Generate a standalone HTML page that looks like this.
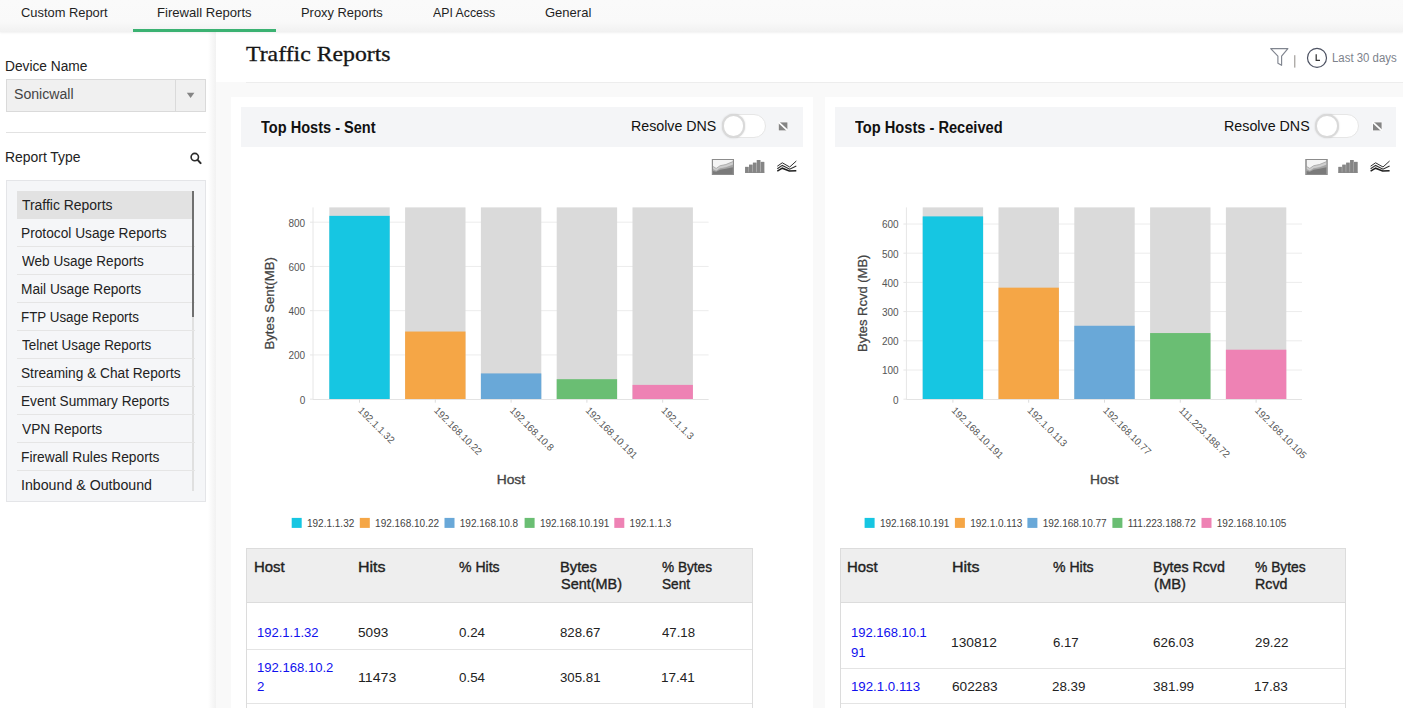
<!DOCTYPE html>
<html>
<head>
<meta charset="utf-8">
<title>Traffic Reports</title>
<style>
html,body{margin:0;padding:0;}
body{width:1403px;height:708px;overflow:hidden;position:relative;background:#f9f9f9;font-family:"Liberation Sans",sans-serif;}
div,span,svg{position:absolute;box-sizing:border-box;}
.t{white-space:nowrap;transform-origin:0 0;}
.card{background:#fff;top:97px;height:620px;}
.ph{background:#f4f5f7;top:107.2px;height:39.8px;}
.tog{width:43.6px;height:23.8px;border-radius:12px;background:#fff;border:1px solid #e6e6e6;top:114px;}
.knob{width:23.6px;height:23.6px;border-radius:50%;background:#fff;border:2.2px solid #d9d9d9;top:114.1px;box-shadow:0 0 2px rgba(0,0,0,.15);}
.tbl{border:1px solid #dcdcdc;background:#fff;top:547.6px;height:170px;width:506.6px;}
.thd{background:#eeeeee;top:548.6px;height:54.4px;width:504.6px;border-bottom:1px solid #dcdcdc;}
.rl{height:1px;background:#e4e4e4;width:504.6px;}
</style>
</head>
<body>
<!-- nav -->
<div style="left:0;top:0;width:1403px;height:32px;background:linear-gradient(180deg,#fafafa 0,#f9f9f9 22px,#f1f1f1 32px);box-shadow:0 1px 2px rgba(0,0,0,.06);z-index:3"></div>
<div style="left:132.8px;top:29.1px;width:143.7px;height:2.9px;background:#3bb272;z-index:4"></div>
<!-- sidebar -->
<div style="left:0;top:32px;width:215.6px;height:676px;background:linear-gradient(90deg,#fff 0,#fff 208px,#f2f2f2 215.6px);z-index:1"></div>
<!-- main header -->
<div style="left:215.6px;top:32px;width:1188px;height:49.6px;background:#fff;"></div>
<div style="left:246px;top:81.6px;width:1157px;height:1px;background:#ededed;"></div>

<!-- sidebar widgets -->
<div style="left:6px;top:79px;width:200px;height:33px;background:#f0f0f0;border:1px solid #dadada;z-index:2"></div>
<div style="left:175px;top:80px;width:1px;height:31px;background:#dadada;z-index:2"></div>
<svg style="left:186px;top:92px;z-index:2" width="10" height="7" viewBox="0 0 10 7"><path d="M0.8 0.7 L8.4 0.7 L4.6 6 Z" fill="#858585"/></svg>
<div style="left:6px;top:131.6px;width:199.6px;height:1px;background:#e2e2e2;z-index:2"></div>
<svg style="left:188px;top:151px;z-index:2" width="15" height="15" viewBox="0 0 15 15"><circle cx="6.8" cy="6.1" r="3.7" fill="none" stroke="#2b2b2b" stroke-width="1.6"/><path d="M9.6 8.9 L12.6 12.1" stroke="#2b2b2b" stroke-width="2.1" stroke-linecap="round"/></svg>
<div style="left:6px;top:180.4px;width:199.6px;height:321.2px;background:#f5f6f8;border:1px solid #e4e5e8;z-index:2"></div>
<div style="left:16.8px;top:191px;width:175.4px;height:28px;background:#e2e2e2;z-index:2"></div>

<div style="left:192.2px;top:191px;width:2px;height:300px;background:#e0e0e0;z-index:2"></div>
<div style="left:16.8px;top:246px;width:178px;height:1px;background:#e5e5e5;z-index:2"></div>
<div style="left:16.8px;top:274px;width:178px;height:1px;background:#e5e5e5;z-index:2"></div>
<div style="left:16.8px;top:302px;width:178px;height:1px;background:#e5e5e5;z-index:2"></div>
<div style="left:16.8px;top:330px;width:178px;height:1px;background:#e5e5e5;z-index:2"></div>
<div style="left:16.8px;top:358px;width:178px;height:1px;background:#e5e5e5;z-index:2"></div>
<div style="left:16.8px;top:386px;width:178px;height:1px;background:#e5e5e5;z-index:2"></div>
<div style="left:16.8px;top:414px;width:178px;height:1px;background:#e5e5e5;z-index:2"></div>
<div style="left:16.8px;top:442px;width:178px;height:1px;background:#e5e5e5;z-index:2"></div>
<div style="left:16.8px;top:470px;width:178px;height:1px;background:#e5e5e5;z-index:2"></div>

<div style="left:192.2px;top:191px;width:2px;height:126px;background:#707070;z-index:2"></div>

<!-- cards -->
<div class="card" style="left:231.1px;width:582.1px;"></div>
<div class="card" style="left:824.7px;width:580px;"></div>
<div class="ph" style="left:241px;width:562px;"></div>
<div class="ph" style="left:834.6px;width:561.6px;"></div>
<div class="tog" style="left:722px;"></div><div class="knob" style="left:721.8px;"></div>
<div class="tog" style="left:1315.6px;"></div><div class="knob" style="left:1315.4px;"></div>

<!-- tables -->
<div class="tbl" style="left:246.2px;"></div><div class="thd" style="left:247.2px;"></div>
<div class="rl" style="left:247.2px;top:649px;"></div><div class="rl" style="left:247.2px;top:703px;"></div>
<div class="tbl" style="left:839.9px;"></div><div class="thd" style="left:840.9px;"></div>
<div class="rl" style="left:840.9px;top:668px;"></div><div class="rl" style="left:840.9px;top:703px;"></div>

<!-- charts + icons -->
<svg style="left:0;top:0;z-index:5" width="1403" height="708" viewBox="0 0 1403 708" font-family="'Liberation Sans', sans-serif">
<line x1="313.0" x2="708.6" y1="354.95" y2="354.95" stroke="#ececec" stroke-width="1"/>
<line x1="313.0" x2="708.6" y1="310.70" y2="310.70" stroke="#ececec" stroke-width="1"/>
<line x1="313.0" x2="708.6" y1="266.45" y2="266.45" stroke="#ececec" stroke-width="1"/>
<line x1="313.0" x2="708.6" y1="222.20" y2="222.20" stroke="#ececec" stroke-width="1"/>
<rect x="329.3" y="207.4" width="60.4" height="191.8" fill="#dadada"/>
<rect x="329.3" y="215.86" width="60.4" height="183.34" fill="#16c6e2"/>
<rect x="405.1" y="207.4" width="60.4" height="191.8" fill="#dadada"/>
<rect x="405.1" y="331.54" width="60.4" height="67.66" fill="#f5a646"/>
<rect x="480.9" y="207.4" width="60.4" height="191.8" fill="#dadada"/>
<rect x="480.9" y="373.42" width="60.4" height="25.78" fill="#69a8d8"/>
<rect x="556.7" y="207.4" width="60.4" height="191.8" fill="#dadada"/>
<rect x="556.7" y="379.18" width="60.4" height="20.02" fill="#6abe73"/>
<rect x="632.5" y="207.4" width="60.4" height="191.8" fill="#dadada"/>
<rect x="632.5" y="384.89" width="60.4" height="14.31" fill="#ee82b4"/>
<line x1="313.0" x2="313.0" y1="207.4" y2="399.7" stroke="#e6e6e6" stroke-width="1"/>
<line x1="313.0" x2="708.6" y1="399.5" y2="399.5" stroke="#e3e3e3" stroke-width="1"/>
<line x1="310.0" x2="313.0" y1="399.20" y2="399.20" stroke="#e6e6e6" stroke-width="1"/>
<text x="305.2" y="403.50" text-anchor="end" font-size="10" fill="#555">0</text>
<line x1="310.0" x2="313.0" y1="354.95" y2="354.95" stroke="#e6e6e6" stroke-width="1"/>
<text x="305.2" y="359.25" text-anchor="end" font-size="10" fill="#555">200</text>
<line x1="310.0" x2="313.0" y1="310.70" y2="310.70" stroke="#e6e6e6" stroke-width="1"/>
<text x="305.2" y="315.00" text-anchor="end" font-size="10" fill="#555">400</text>
<line x1="310.0" x2="313.0" y1="266.45" y2="266.45" stroke="#e6e6e6" stroke-width="1"/>
<text x="305.2" y="270.75" text-anchor="end" font-size="10" fill="#555">600</text>
<line x1="310.0" x2="313.0" y1="222.20" y2="222.20" stroke="#e6e6e6" stroke-width="1"/>
<text x="305.2" y="226.50" text-anchor="end" font-size="10" fill="#555">800</text>
<line x1="359.5" x2="359.5" y1="399.2" y2="402.7" stroke="#dcdcdc" stroke-width="1"/>
<text transform="translate(357.6,411.1) rotate(45)" font-size="9.85" fill="#555">192.1.1.32</text>
<line x1="435.3" x2="435.3" y1="399.2" y2="402.7" stroke="#dcdcdc" stroke-width="1"/>
<text transform="translate(433.4,411.1) rotate(45)" font-size="9.85" fill="#555">192.168.10.22</text>
<line x1="511.1" x2="511.1" y1="399.2" y2="402.7" stroke="#dcdcdc" stroke-width="1"/>
<text transform="translate(509.2,411.1) rotate(45)" font-size="9.85" fill="#555">192.168.10.8</text>
<line x1="586.9" x2="586.9" y1="399.2" y2="402.7" stroke="#dcdcdc" stroke-width="1"/>
<text transform="translate(585.0,411.1) rotate(45)" font-size="9.85" fill="#555">192.168.10.191</text>
<line x1="662.7" x2="662.7" y1="399.2" y2="402.7" stroke="#dcdcdc" stroke-width="1"/>
<text transform="translate(660.8,411.1) rotate(45)" font-size="9.85" fill="#555">192.1.1.3</text>
<text transform="translate(274.0,303.3) rotate(-90)" text-anchor="middle" font-size="13" fill="#444" stroke="#444" stroke-width="0.25" textLength="92.5" lengthAdjust="spacingAndGlyphs">Bytes Sent(MB)</text>
<text x="510.9" y="483.7" text-anchor="middle" font-size="13" fill="#444" stroke="#444" stroke-width="0.35" textLength="28.4" lengthAdjust="spacingAndGlyphs">Host</text>
<rect x="291.7" y="517.9" width="10" height="10" fill="#16c6e2"/>
<text x="307.0" y="526.6" font-size="10" fill="#444">192.1.1.32</text>
<rect x="359.8" y="517.9" width="10" height="10" fill="#f5a646"/>
<text x="375.1" y="526.6" font-size="10" fill="#444">192.168.10.22</text>
<rect x="444.5" y="517.9" width="10" height="10" fill="#69a8d8"/>
<text x="459.8" y="526.6" font-size="10" fill="#444">192.168.10.8</text>
<rect x="524.6" y="517.9" width="10" height="10" fill="#6abe73"/>
<text x="539.9" y="526.6" font-size="10" fill="#444">192.168.10.191</text>
<rect x="614.3" y="517.9" width="10" height="10" fill="#ee82b4"/>
<text x="629.6" y="526.6" font-size="10" fill="#444">192.1.1.3</text>
<line x1="906.4" x2="1302.0" y1="370.00" y2="370.00" stroke="#ececec" stroke-width="1"/>
<line x1="906.4" x2="1302.0" y1="340.80" y2="340.80" stroke="#ececec" stroke-width="1"/>
<line x1="906.4" x2="1302.0" y1="311.60" y2="311.60" stroke="#ececec" stroke-width="1"/>
<line x1="906.4" x2="1302.0" y1="282.40" y2="282.40" stroke="#ececec" stroke-width="1"/>
<line x1="906.4" x2="1302.0" y1="253.20" y2="253.20" stroke="#ececec" stroke-width="1"/>
<line x1="906.4" x2="1302.0" y1="224.00" y2="224.00" stroke="#ececec" stroke-width="1"/>
<rect x="922.7" y="207.4" width="60.4" height="191.8" fill="#dadada"/>
<rect x="922.7" y="216.40" width="60.4" height="182.80" fill="#16c6e2"/>
<rect x="998.5" y="207.4" width="60.4" height="191.8" fill="#dadada"/>
<rect x="998.5" y="287.66" width="60.4" height="111.54" fill="#f5a646"/>
<rect x="1074.3" y="207.4" width="60.4" height="191.8" fill="#dadada"/>
<rect x="1074.3" y="325.76" width="60.4" height="73.44" fill="#69a8d8"/>
<rect x="1150.1" y="207.4" width="60.4" height="191.8" fill="#dadada"/>
<rect x="1150.1" y="333.06" width="60.4" height="66.14" fill="#6abe73"/>
<rect x="1225.9" y="207.4" width="60.4" height="191.8" fill="#dadada"/>
<rect x="1225.9" y="349.71" width="60.4" height="49.49" fill="#ee82b4"/>
<line x1="906.4" x2="906.4" y1="207.4" y2="399.7" stroke="#e6e6e6" stroke-width="1"/>
<line x1="906.4" x2="1302.0" y1="399.5" y2="399.5" stroke="#e3e3e3" stroke-width="1"/>
<line x1="903.4" x2="906.4" y1="399.20" y2="399.20" stroke="#e6e6e6" stroke-width="1"/>
<text x="898.6" y="403.50" text-anchor="end" font-size="10" fill="#555">0</text>
<line x1="903.4" x2="906.4" y1="370.00" y2="370.00" stroke="#e6e6e6" stroke-width="1"/>
<text x="898.6" y="374.30" text-anchor="end" font-size="10" fill="#555">100</text>
<line x1="903.4" x2="906.4" y1="340.80" y2="340.80" stroke="#e6e6e6" stroke-width="1"/>
<text x="898.6" y="345.10" text-anchor="end" font-size="10" fill="#555">200</text>
<line x1="903.4" x2="906.4" y1="311.60" y2="311.60" stroke="#e6e6e6" stroke-width="1"/>
<text x="898.6" y="315.90" text-anchor="end" font-size="10" fill="#555">300</text>
<line x1="903.4" x2="906.4" y1="282.40" y2="282.40" stroke="#e6e6e6" stroke-width="1"/>
<text x="898.6" y="286.70" text-anchor="end" font-size="10" fill="#555">400</text>
<line x1="903.4" x2="906.4" y1="253.20" y2="253.20" stroke="#e6e6e6" stroke-width="1"/>
<text x="898.6" y="257.50" text-anchor="end" font-size="10" fill="#555">500</text>
<line x1="903.4" x2="906.4" y1="224.00" y2="224.00" stroke="#e6e6e6" stroke-width="1"/>
<text x="898.6" y="228.30" text-anchor="end" font-size="10" fill="#555">600</text>
<line x1="952.9" x2="952.9" y1="399.2" y2="402.7" stroke="#dcdcdc" stroke-width="1"/>
<text transform="translate(951.0,411.1) rotate(45)" font-size="9.85" fill="#555">192.168.10.191</text>
<line x1="1028.7" x2="1028.7" y1="399.2" y2="402.7" stroke="#dcdcdc" stroke-width="1"/>
<text transform="translate(1026.8,411.1) rotate(45)" font-size="9.85" fill="#555">192.1.0.113</text>
<line x1="1104.5" x2="1104.5" y1="399.2" y2="402.7" stroke="#dcdcdc" stroke-width="1"/>
<text transform="translate(1102.6,411.1) rotate(45)" font-size="9.85" fill="#555">192.168.10.77</text>
<line x1="1180.3" x2="1180.3" y1="399.2" y2="402.7" stroke="#dcdcdc" stroke-width="1"/>
<text transform="translate(1178.4,411.1) rotate(45)" font-size="9.85" fill="#555">111.223.188.72</text>
<line x1="1256.1" x2="1256.1" y1="399.2" y2="402.7" stroke="#dcdcdc" stroke-width="1"/>
<text transform="translate(1254.2,411.1) rotate(45)" font-size="9.85" fill="#555">192.168.10.105</text>
<text transform="translate(867.4,303.3) rotate(-90)" text-anchor="middle" font-size="13" fill="#444" stroke="#444" stroke-width="0.25" textLength="97.3" lengthAdjust="spacingAndGlyphs">Bytes Rcvd (MB)</text>
<text x="1104.3" y="483.7" text-anchor="middle" font-size="13" fill="#444" stroke="#444" stroke-width="0.35" textLength="28.4" lengthAdjust="spacingAndGlyphs">Host</text>
<rect x="864.6" y="517.9" width="10" height="10" fill="#16c6e2"/>
<text x="879.9" y="526.6" font-size="10" fill="#444">192.168.10.191</text>
<rect x="954.9" y="517.9" width="10" height="10" fill="#f5a646"/>
<text x="970.2" y="526.6" font-size="10" fill="#444">192.1.0.113</text>
<rect x="1027.4" y="517.9" width="10" height="10" fill="#69a8d8"/>
<text x="1042.7" y="526.6" font-size="10" fill="#444">192.168.10.77</text>
<rect x="1112.4" y="517.9" width="10" height="10" fill="#6abe73"/>
<text x="1127.7" y="526.6" font-size="10" fill="#444">111.223.188.72</text>
<rect x="1201.5" y="517.9" width="10" height="10" fill="#ee82b4"/>
<text x="1216.8" y="526.6" font-size="10" fill="#444">192.168.10.105</text>
<path d="M1270.7 48.6 L1287.9 48.6 L1281.6 56.2 L1281.6 65.3 L1277.9 63.2 L1277.9 56.2 Z" fill="none" stroke="#80858f" stroke-width="1.15" stroke-linejoin="round"/>
<rect x="1294.3" y="55.2" width="1" height="12.4" fill="#8f8a86"/>
<circle cx="1317" cy="57.9" r="9.5" fill="none" stroke="#4d5262" stroke-width="1.2"/>
<path d="M1316.2 54.3 L1316.2 60.4 L1320 60.4" fill="none" stroke="#333" stroke-width="1.25"/>
<rect x="778.1" y="121.7" width="10" height="9.4" fill="#fff" opacity="0.6"/>
<rect x="778.8" y="122.4" width="8.6" height="8" fill="#848484"/>
<path d="M778.5 122.1 L787.7 130.7" stroke="#fff" stroke-width="1.7"/>
<rect x="1372.3" y="121.7" width="10" height="9.4" fill="#fff" opacity="0.6"/>
<rect x="1373.0" y="122.4" width="8.6" height="8" fill="#848484"/>
<path d="M1372.7 122.1 L1381.9 130.7" stroke="#fff" stroke-width="1.7"/>
<rect x="712.4" y="159.5" width="21" height="15" fill="#f4f4f4" stroke="#8c8c8c" stroke-width="1"/>
<polygon points="712.9,166.4 716.2,168.4 720.1,165.7 725.9,164.5 732.9,161.6 732.9,174.0 712.9,174.0" fill="#cdcdcd"/>
<polygon points="712.9,168.6 716.2,170.3 720.1,167.8 725.9,166.8 732.9,164.2 732.9,174.0 712.9,174.0" fill="#a4a4a4"/>
<polygon points="712.9,171.0 716.2,171.8 720.1,169.8 725.9,168.8 732.9,167.2 732.9,174.0 712.9,174.0" fill="#7a7a7a"/>
<polyline points="712.9,166.4 716.2,168.4 720.1,165.7 725.9,164.5 732.9,161.6" fill="none" stroke="#9a9a9a" stroke-width="0.7"/>
<polyline points="712.9,168.6 716.2,170.3 720.1,167.8 725.9,166.8 732.9,164.2" fill="none" stroke="#dcdcdc" stroke-width="0.5"/>
<rect x="712.4" y="159.5" width="21" height="15" fill="none" stroke="#8c8c8c" stroke-width="1"/>
<rect x="745.1" y="166.9" width="3.9" height="5.9" fill="#b4b4b4"/>
<rect x="749.0" y="164.7" width="3.9" height="8.1" fill="#b4b4b4"/>
<rect x="752.9" y="162.7" width="3.9" height="10.1" fill="#b4b4b4"/>
<rect x="756.8" y="160.0" width="3.9" height="12.8" fill="#b4b4b4"/>
<rect x="760.7" y="161.9" width="3.9" height="10.9" fill="#b4b4b4"/>
<rect x="745.1" y="166.9" width="3.3" height="5.9" fill="#858585"/>
<rect x="749.0" y="164.7" width="3.3" height="8.1" fill="#858585"/>
<rect x="752.9" y="162.7" width="3.3" height="10.1" fill="#858585"/>
<rect x="756.8" y="160.0" width="3.3" height="12.8" fill="#858585"/>
<rect x="760.7" y="161.9" width="3.3" height="10.9" fill="#858585"/>
<rect x="745.1" y="171.8" width="19.2" height="1" fill="#868686"/>
<polyline points="777.3,166.2 782.3,162.8 789.7,167.0 796.3,161.0" fill="none" stroke="#2e2e2e" stroke-width="1"/>
<polyline points="777.3,168.8 782.3,165.4 789.7,169.2 796.3,166.0" fill="none" stroke="#2e2e2e" stroke-width="1.1"/>
<polyline points="777.3,171.2 782.3,168.2 789.3,171.0 796.3,170.8" fill="none" stroke="#1e1e1e" stroke-width="1.5"/>
<rect x="1306.0" y="159.5" width="21" height="15" fill="#f4f4f4" stroke="#8c8c8c" stroke-width="1"/>
<polygon points="1306.5,166.4 1309.8,168.4 1313.7,165.7 1319.5,164.5 1326.5,161.6 1326.5,174.0 1306.5,174.0" fill="#cdcdcd"/>
<polygon points="1306.5,168.6 1309.8,170.3 1313.7,167.8 1319.5,166.8 1326.5,164.2 1326.5,174.0 1306.5,174.0" fill="#a4a4a4"/>
<polygon points="1306.5,171.0 1309.8,171.8 1313.7,169.8 1319.5,168.8 1326.5,167.2 1326.5,174.0 1306.5,174.0" fill="#7a7a7a"/>
<polyline points="1306.5,166.4 1309.8,168.4 1313.7,165.7 1319.5,164.5 1326.5,161.6" fill="none" stroke="#9a9a9a" stroke-width="0.7"/>
<polyline points="1306.5,168.6 1309.8,170.3 1313.7,167.8 1319.5,166.8 1326.5,164.2" fill="none" stroke="#dcdcdc" stroke-width="0.5"/>
<rect x="1306.0" y="159.5" width="21" height="15" fill="none" stroke="#8c8c8c" stroke-width="1"/>
<rect x="1338.4" y="166.9" width="3.9" height="5.9" fill="#b4b4b4"/>
<rect x="1342.3" y="164.7" width="3.9" height="8.1" fill="#b4b4b4"/>
<rect x="1346.2" y="162.7" width="3.9" height="10.1" fill="#b4b4b4"/>
<rect x="1350.1" y="160.0" width="3.9" height="12.8" fill="#b4b4b4"/>
<rect x="1354.0" y="161.9" width="3.9" height="10.9" fill="#b4b4b4"/>
<rect x="1338.4" y="166.9" width="3.3" height="5.9" fill="#858585"/>
<rect x="1342.3" y="164.7" width="3.3" height="8.1" fill="#858585"/>
<rect x="1346.2" y="162.7" width="3.3" height="10.1" fill="#858585"/>
<rect x="1350.1" y="160.0" width="3.3" height="12.8" fill="#858585"/>
<rect x="1354.0" y="161.9" width="3.3" height="10.9" fill="#858585"/>
<rect x="1338.4" y="171.8" width="19.2" height="1" fill="#868686"/>
<polyline points="1370.6,166.2 1375.6,162.8 1383.0,167.0 1389.6,161.0" fill="none" stroke="#2e2e2e" stroke-width="1"/>
<polyline points="1370.6,168.8 1375.6,165.4 1383.0,169.2 1389.6,166.0" fill="none" stroke="#2e2e2e" stroke-width="1.1"/>
<polyline points="1370.6,171.2 1375.6,168.2 1382.6,171.0 1389.6,170.8" fill="none" stroke="#1e1e1e" stroke-width="1.5"/>
</svg>

<!-- text -->
<div style="left:0;top:0;width:1403px;height:708px;z-index:6">
<span class="t" style='left:20.61px;top:-6.90px;font:400 13px/40px "Liberation Sans", sans-serif;color:#1f1f1f;transform:scaleX(0.9911);'>Custom Report</span>
<span class="t" style='left:156.99px;top:-6.90px;font:400 13px/40px "Liberation Sans", sans-serif;color:#1f1f1f;transform:scaleX(1.0078);'>Firewall Reports</span>
<span class="t" style='left:301.11px;top:-6.90px;font:400 13px/40px "Liberation Sans", sans-serif;color:#1f1f1f;transform:scaleX(0.9921);'>Proxy Reports</span>
<span class="t" style='left:432.67px;top:-6.90px;font:400 13px/40px "Liberation Sans", sans-serif;color:#1f1f1f;transform:scaleX(0.9468);'>API Access</span>
<span class="t" style='left:544.70px;top:-6.90px;font:400 13px/40px "Liberation Sans", sans-serif;color:#1f1f1f;transform:scaleX(1.0008);'>General</span>
<span class="t" style='left:5.28px;top:45.70px;font:400 14px/40px "Liberation Sans", sans-serif;color:#222;transform:scaleX(0.9810);'>Device Name</span>
<span class="t" style='left:13.96px;top:73.70px;font:400 14px/40px "Liberation Sans", sans-serif;color:#444;transform:scaleX(1.0080);'>Sonicwall</span>
<span class="t" style='left:5.27px;top:137.00px;font:400 14px/40px "Liberation Sans", sans-serif;color:#222;transform:scaleX(0.9938);'>Report Type</span>
<span class="t" style='left:21.92px;top:184.60px;font:400 14px/40px "Liberation Sans", sans-serif;color:#222;transform:scaleX(0.9945);'>Traffic Reports</span>
<span class="t" style='left:21.08px;top:212.60px;font:400 14px/40px "Liberation Sans", sans-serif;color:#222;transform:scaleX(0.9798);'>Protocol Usage Reports</span>
<span class="t" style='left:22.01px;top:240.60px;font:400 14px/40px "Liberation Sans", sans-serif;color:#222;transform:scaleX(0.9680);'>Web Usage Reports</span>
<span class="t" style='left:21.08px;top:268.60px;font:400 14px/40px "Liberation Sans", sans-serif;color:#222;transform:scaleX(0.9775);'>Mail Usage Reports</span>
<span class="t" style='left:21.11px;top:296.60px;font:400 14px/40px "Liberation Sans", sans-serif;color:#222;transform:scaleX(0.9552);'>FTP Usage Reports</span>
<span class="t" style='left:21.93px;top:324.60px;font:400 14px/40px "Liberation Sans", sans-serif;color:#222;transform:scaleX(0.9595);'>Telnet Usage Reports</span>
<span class="t" style='left:21.09px;top:352.60px;font:400 14px/40px "Liberation Sans", sans-serif;color:#222;transform:scaleX(0.9768);'>Streaming &amp; Chat Reports</span>
<span class="t" style='left:21.09px;top:380.60px;font:400 14px/40px "Liberation Sans", sans-serif;color:#222;transform:scaleX(0.9731);'>Event Summary Reports</span>
<span class="t" style='left:21.97px;top:408.60px;font:400 14px/40px "Liberation Sans", sans-serif;color:#222;transform:scaleX(0.9806);'>VPN Reports</span>
<span class="t" style='left:21.08px;top:436.60px;font:400 14px/40px "Liberation Sans", sans-serif;color:#222;transform:scaleX(0.9830);'>Firewall Rules Reports</span>
<span class="t" style='left:20.90px;top:464.60px;font:400 14px/40px "Liberation Sans", sans-serif;color:#222;transform:scaleX(1.0135);'>Inbound &amp; Outbound</span>
<span class="t" style='left:246.11px;top:34.20px;font:400 21px/40px "Liberation Serif", serif;color:#161616;transform:scaleX(1.1321);-webkit-text-stroke:0.3px #161616;'>Traffic Reports</span>
<span class="t" style='left:1331.65px;top:38.20px;font:400 12px/40px "Liberation Sans", sans-serif;color:#7d828c;transform:scaleX(0.9501);'>Last 30 days</span>
<span class="t" style='left:261.24px;top:108.00px;font:700 16px/40px "Liberation Sans", sans-serif;color:#111;transform:scaleX(0.9100);'>Top Hosts - Sent</span>
<span class="t" style='left:855.24px;top:108.00px;font:700 16px/40px "Liberation Sans", sans-serif;color:#111;transform:scaleX(0.9140);'>Top Hosts - Received</span>
<span class="t" style='left:630.75px;top:106.00px;font:400 15px/40px "Liberation Sans", sans-serif;color:#111;transform:scaleX(0.9481);'>Resolve DNS</span>
<span class="t" style='left:1223.85px;top:106.00px;font:400 15px/40px "Liberation Sans", sans-serif;color:#111;transform:scaleX(0.9515);'>Resolve DNS</span>
<span class="t" style='left:253.83px;top:546.80px;font:400 14px/40px "Liberation Sans", sans-serif;color:#222;transform:scaleX(1.0661);-webkit-text-stroke:0.35px #222;'>Host</span>
<span class="t" style='left:357.96px;top:546.80px;font:400 14px/40px "Liberation Sans", sans-serif;color:#222;transform:scaleX(1.1420);-webkit-text-stroke:0.35px #222;'>Hits</span>
<span class="t" style='left:459.25px;top:546.80px;font:400 14px/40px "Liberation Sans", sans-serif;color:#222;transform:scaleX(1.0041);-webkit-text-stroke:0.35px #222;'>% Hits</span>
<span class="t" style='left:560.15px;top:546.80px;font:400 14px/40px "Liberation Sans", sans-serif;color:#222;transform:scaleX(1.0515);-webkit-text-stroke:0.35px #222;'>Bytes</span>
<span class="t" style='left:560.69px;top:563.60px;font:400 14px/40px "Liberation Sans", sans-serif;color:#222;transform:scaleX(1.0312);-webkit-text-stroke:0.35px #222;'>Sent(MB)</span>
<span class="t" style='left:661.86px;top:546.80px;font:400 14px/40px "Liberation Sans", sans-serif;color:#222;transform:scaleX(0.9733);-webkit-text-stroke:0.35px #222;'>% Bytes</span>
<span class="t" style='left:661.62px;top:563.60px;font:400 14px/40px "Liberation Sans", sans-serif;color:#222;transform:scaleX(0.9741);-webkit-text-stroke:0.35px #222;'>Sent</span>
<span class="t" style='left:847.43px;top:546.80px;font:400 14px/40px "Liberation Sans", sans-serif;color:#222;transform:scaleX(1.0661);-webkit-text-stroke:0.35px #222;'>Host</span>
<span class="t" style='left:951.56px;top:546.80px;font:400 14px/40px "Liberation Sans", sans-serif;color:#222;transform:scaleX(1.1420);-webkit-text-stroke:0.35px #222;'>Hits</span>
<span class="t" style='left:1052.85px;top:546.80px;font:400 14px/40px "Liberation Sans", sans-serif;color:#222;transform:scaleX(1.0041);-webkit-text-stroke:0.35px #222;'>% Hits</span>
<span class="t" style='left:1153.49px;top:546.80px;font:400 14px/40px "Liberation Sans", sans-serif;color:#222;transform:scaleX(1.0143);-webkit-text-stroke:0.35px #222;'>Bytes Rcvd</span>
<span class="t" style='left:1153.83px;top:563.60px;font:400 14px/40px "Liberation Sans", sans-serif;color:#222;transform:scaleX(1.0557);-webkit-text-stroke:0.35px #222;'>(MB)</span>
<span class="t" style='left:1255.36px;top:546.80px;font:400 14px/40px "Liberation Sans", sans-serif;color:#222;transform:scaleX(0.9871);-webkit-text-stroke:0.35px #222;'>% Bytes</span>
<span class="t" style='left:1254.58px;top:563.60px;font:400 14px/40px "Liberation Sans", sans-serif;color:#222;transform:scaleX(1.0162);-webkit-text-stroke:0.35px #222;'>Rcvd</span>
<span class="t" style='left:256.80px;top:613.30px;font:400 13px/40px "Liberation Sans", sans-serif;color:#1010ee;transform:scaleX(1.0017);'>192.1.1.32</span>
<span class="t" style='left:357.96px;top:613.30px;font:400 13px/40px "Liberation Sans", sans-serif;color:#222;transform:scaleX(1.0481);'>5093</span>
<span class="t" style='left:458.62px;top:613.30px;font:400 13px/40px "Liberation Sans", sans-serif;color:#222;transform:scaleX(1.0271);'>0.24</span>
<span class="t" style='left:560.26px;top:613.30px;font:400 13px/40px "Liberation Sans", sans-serif;color:#222;transform:scaleX(1.0169);'>828.67</span>
<span class="t" style='left:661.52px;top:613.30px;font:400 13px/40px "Liberation Sans", sans-serif;color:#222;transform:scaleX(1.0151);'>47.18</span>
<span class="t" style='left:256.79px;top:647.70px;font:400 13px/40px "Liberation Sans", sans-serif;color:#1010ee;transform:scaleX(1.0062);'>192.168.10.2</span>
<span class="t" style='left:257.19px;top:667.20px;font:400 13px/40px "Liberation Sans", sans-serif;color:#1010ee;transform:scaleX(1.0200);'>2</span>
<span class="t" style='left:357.61px;top:657.70px;font:400 13px/40px "Liberation Sans", sans-serif;color:#222;transform:scaleX(1.0875);'>11473</span>
<span class="t" style='left:458.62px;top:657.70px;font:400 13px/40px "Liberation Sans", sans-serif;color:#222;transform:scaleX(1.0271);'>0.54</span>
<span class="t" style='left:560.12px;top:657.70px;font:400 13px/40px "Liberation Sans", sans-serif;color:#222;transform:scaleX(1.0194);'>305.81</span>
<span class="t" style='left:660.66px;top:657.70px;font:400 13px/40px "Liberation Sans", sans-serif;color:#222;transform:scaleX(1.0419);'>17.41</span>
<span class="t" style='left:850.80px;top:613.30px;font:400 13px/40px "Liberation Sans", sans-serif;color:#1010ee;transform:scaleX(0.9991);'>192.168.10.1</span>
<span class="t" style='left:851.18px;top:632.80px;font:400 13px/40px "Liberation Sans", sans-serif;color:#1010ee;transform:scaleX(1.0200);'>91</span>
<span class="t" style='left:951.14px;top:622.80px;font:400 13px/40px "Liberation Sans", sans-serif;color:#222;transform:scaleX(1.0571);'>130812</span>
<span class="t" style='left:1052.50px;top:622.80px;font:400 13px/40px "Liberation Sans", sans-serif;color:#222;transform:scaleX(1.0155);'>6.17</span>
<span class="t" style='left:1153.49px;top:622.80px;font:400 13px/40px "Liberation Sans", sans-serif;color:#222;transform:scaleX(1.0305);'>626.03</span>
<span class="t" style='left:1254.59px;top:622.80px;font:400 13px/40px "Liberation Sans", sans-serif;color:#222;transform:scaleX(1.0285);'>29.22</span>
<span class="t" style='left:850.78px;top:667.20px;font:400 13px/40px "Liberation Sans", sans-serif;color:#1010ee;transform:scaleX(1.0194);'>192.1.0.113</span>
<span class="t" style='left:951.57px;top:667.20px;font:400 13px/40px "Liberation Sans", sans-serif;color:#222;transform:scaleX(1.0518);'>602283</span>
<span class="t" style='left:1052.49px;top:667.20px;font:400 13px/40px "Liberation Sans", sans-serif;color:#222;transform:scaleX(1.0285);'>28.39</span>
<span class="t" style='left:1153.41px;top:667.20px;font:400 13px/40px "Liberation Sans", sans-serif;color:#222;transform:scaleX(1.0330);'>381.99</span>
<span class="t" style='left:1254.16px;top:667.20px;font:400 13px/40px "Liberation Sans", sans-serif;color:#222;transform:scaleX(1.0419);'>17.83</span>
</div>
</body>
</html>
